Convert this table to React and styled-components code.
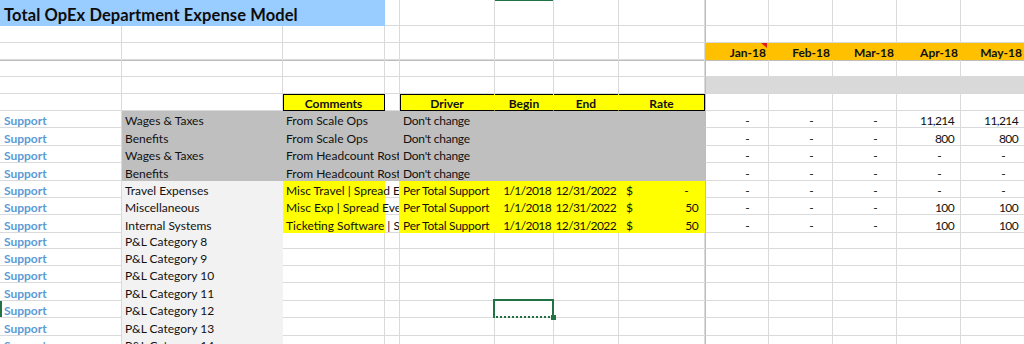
// NPM
import React from "react";
import styled, { createGlobalStyle } from "styled-components";

// CONFIG
const GRID = "#dadada";
const FREEZE = "#bdbdbd";
const BLUE = "#99ccff";
const ORANGE = "#ffc000";
const YELLOW = "#ffff00";
const GRAY = "#bfbfbf";
const BAND = "#d9d9d9";
const PALE = "#f2f2f2";
const GREEN = "#217346";

const COLS = [122, 161, 102, 15, 95, 59, 65, 86, 64, 64, 64, 64, 64];
const ROWS = [26, 17, 17, 17, 17, 17, 17, 18, 17, 18, 17, 17, 18, 16, 17, 17, 18, 17, 18, 17];

const MONTHS = ["Jan-18", "Feb-18", "Mar-18", "Apr-18", "May-18"];

const LINES = [
  { cat: "Wages & Taxes", note: "From Scale Ops", driver: "Don't change", vals: ["-", "-", "-", "11,214", "11,214"] },
  { cat: "Benefits", note: "From Scale Ops", driver: "Don't change", vals: ["-", "-", "-", "800", "800"] },
  { cat: "Wages & Taxes", note: "From Headcount Roster", driver: "Don't change", vals: ["-", "-", "-", "-", "-"] },
  { cat: "Benefits", note: "From Headcount Roster", driver: "Don't change", vals: ["-", "-", "-", "-", "-"] },
  {
    cat: "Travel Expenses",
    note: "Misc Travel | Spread Evenly",
    driver: "Per Total Support",
    begin: "1/1/2018",
    end: "12/31/2022",
    rate: "-",
    vals: ["-", "-", "-", "-", "-"],
  },
  {
    cat: "Miscellaneous",
    note: "Misc Exp | Spread Evenly",
    driver: "Per Total Support",
    begin: "1/1/2018",
    end: "12/31/2022",
    rate: "50",
    vals: ["-", "-", "-", "100", "100"],
  },
  {
    cat: "Internal Systems",
    note: "Ticketing Software | Spread Evenly",
    driver: "Per Total Support",
    begin: "1/1/2018",
    end: "12/31/2022",
    rate: "50",
    vals: ["-", "-", "-", "100", "100"],
  },
];

const EXTRA = [8, 9, 10, 11, 12, 13, 14];
const SELECTED_ROW = 17;

const GlobalStyle = createGlobalStyle`
  html, body {
    margin: 0;
    padding: 0;
    background: #fff;
    overflow: hidden;
  }
  body {
    font-family: Lato, "Open Sans", sans-serif;
    color: #111;
  }
`;

const Sheet = styled.div`
  display: grid;
  grid-template-columns: ${COLS.map(c => `${c}px`).join(" ")};
  grid-template-rows: ${ROWS.map(r => `${r}px`).join(" ")};
  width: 1024px;
  height: 344px;
  overflow: hidden;
`;

const edge = (p, side) =>
  p.$outline && p.$outline.includes(side) ? "#000" : p.$bg || GRID;

const shadows = p => {
  const s = [];
  if (p.$outline && p.$outline.includes("t")) s.push("inset 0 1px 0 #000");
  if (p.$outline && p.$outline.includes("l")) s.push("inset 1px 0 0 #000");
  if (p.$mark === "top") s.push(`inset 0 1px 0 ${GREEN}`);
  if (p.$mark === "left") s.push(`inset 2px 0 0 ${GREEN}`);
  if (p.$freezeTop) s.push(`inset 0 1px 0 ${FREEZE}`);
  return s.length ? s.join(", ") : "none";
};

const justify = { left: "flex-start", right: "flex-end", center: "center", between: "space-between" };

const Cell = styled.div`
  box-sizing: border-box;
  position: relative;
  display: flex;
  align-items: flex-end;
  justify-content: ${p => justify[p.$align || "left"]};
  min-width: 0;
  padding: 0 ${p => (p.$pr != null ? p.$pr : 3)}px 0 ${p => (p.$pl != null ? p.$pl : 3)}px;
  background: ${p => p.$bg || "#fff"};
  border-right: 1px solid ${p => edge(p, "r")};
  border-bottom: 1px solid ${p => edge(p, "b")};
  border-left: ${p => (p.$freezeLeft ? `1px solid ${FREEZE}` : "none")};
  box-shadow: ${shadows};
  font-size: 12px;
  line-height: 13px;
  letter-spacing: ${p => (p.$num ? "-0.6px" : p.$tight ? "-0.25px" : "0")};
  font-weight: ${p => (p.$bold ? 700 : 400)};
  color: ${p => p.$color || "#111"};
  white-space: nowrap;
  overflow: ${p => (p.$spill || p.$selected || p.$note ? "visible" : "hidden")};
  z-index: ${p => (p.$selected ? 3 : p.$spill ? 1 : "auto")};
  grid-column: ${p => (p.$span ? `span ${p.$span}` : "auto")};

  ${p =>
    p.$selected &&
    `
    &::after {
      content: "";
      position: absolute;
      left: -2px;
      top: -2px;
      right: -1px;
      bottom: -1px;
      border: 2px solid ${GREEN};
      border-bottom-style: dotted;
    }
    &::before {
      content: "";
      position: absolute;
      right: -3px;
      bottom: -3px;
      width: 5px;
      height: 5px;
      background: ${GREEN};
      z-index: 1;
    }
  `}

  ${p =>
    p.$note &&
    `
    &::after {
      content: "";
      position: absolute;
      top: 0;
      right: 1px;
      border-style: solid;
      border-width: 0 6px 5px 0;
      border-color: transparent #e01b1b transparent transparent;
    }
  `}
`;

const TitleCell = styled(Cell)`
  font-size: 16.5px;
  line-height: 16px;
  letter-spacing: 0.1px;
  padding-bottom: 2px;
  padding-left: 4px;
  color: #0d0d0d;
`;

const Spill = styled.span`
  display: block;
  flex: 1 1 auto;
  min-width: 0;
  overflow: hidden;
  margin-right: ${p => -(p.$spill + 3)}px;
`;

const Amount = styled.span`
  margin-right: ${p => (p.$dash ? 10 : 0)}px;
`;

const Blank = ({ n, from = 0, mark, freezeTop, markCol }) =>
  Array.from({ length: n }, (_, i) => {
    const col = from + i;
    return (
      <Cell
        key={col}
        $freezeLeft={col === 8}
        $freezeTop={freezeTop}
        $mark={markCol === col ? mark : undefined}
      />
    );
  });

const MonthValues = ({ vals }) =>
  vals.map((v, i) => (
    <Cell key={`m${i}`} $num $align="right" $pr={v === "-" ? 19 : 6} $freezeLeft={i === 0}>
      {v}
    </Cell>
  ));

function SupportRow({ line }) {
  const gray = !line.begin;
  const fill = gray ? GRAY : YELLOW;
  return (
    <>
      <Cell $bold $color="#5b9bd5" $pl={4}>
        Support
      </Cell>
      <Cell $bg={gray ? GRAY : PALE}>{line.cat}</Cell>
      <Cell $bg={fill} $spill>
        <Spill $spill={15}>{line.note}</Spill>
      </Cell>
      <Cell $bg={gray ? GRAY : undefined} />
      <Cell $bg={fill} $tight>
        {line.driver}
      </Cell>
      <Cell $bg={fill} $num $align="right" $pr={2}>
        {line.begin}
      </Cell>
      <Cell $bg={fill} $num $align="right" $pr={2}>
        {line.end}
      </Cell>
      <Cell $bg={fill} $num $align="between" $pl={7} $pr={6}>
        {line.rate && (
          <>
            <span>$</span>
            <Amount $dash={line.rate === "-"}>{line.rate}</Amount>
          </>
        )}
      </Cell>
      <MonthValues vals={line.vals} />
    </>
  );
}

function CategoryRow({ n, selected }) {
  return (
    <>
      <Cell $bold $color="#5b9bd5" $pl={4} $mark={selected ? "left" : undefined}>
        Support
      </Cell>
      <Cell $bg={PALE}>P&amp;L Category {n}</Cell>
      <Cell />
      <Cell />
      <Cell />
      <Cell $selected={selected} />
      <Cell />
      <Cell />
      <Blank n={5} from={8} />
    </>
  );
}

// MODULE
export default function App() {
  return (
    <>
      <GlobalStyle />
      <Sheet>
        {/* row 0 : title */}
        <TitleCell $span={3} $bg={BLUE} $bold>
          Total OpEx Department Expense Model
        </TitleCell>
        <Blank n={10} from={3} mark="top" markCol={5} />

        {/* row 1 */}
        <Blank n={13} />

        {/* row 2 : months */}
        <Blank n={8} />
        {MONTHS.map((m, i) => (
          <Cell key={m} $bg={ORANGE} $bold $align="right" $pr={2} $freezeLeft={i === 0} $note={i === 0}>
            {m}
          </Cell>
        ))}

        {/* row 3 */}
        <Blank n={13} freezeTop />

        {/* row 4 : band */}
        <Blank n={8} />
        {MONTHS.map((m, i) => (
          <Cell key={`b${m}`} $bg={BAND} $freezeLeft={i === 0} />
        ))}

        {/* row 5 : headers */}
        <Cell />
        <Cell />
        <Cell $bg={YELLOW} $bold $align="center" $outline="tblr">
          Comments
        </Cell>
        <Cell />
        <Cell $bg={YELLOW} $bold $align="center" $outline="tbl">
          Driver
        </Cell>
        <Cell $bg={YELLOW} $bold $align="center" $outline="tb">
          Begin
        </Cell>
        <Cell $bg={YELLOW} $bold $align="center" $outline="tb">
          End
        </Cell>
        <Cell $bg={YELLOW} $bold $align="center" $outline="tbr">
          Rate
        </Cell>
        <Blank n={5} from={8} />

        {LINES.map((line, i) => (
          <SupportRow key={i} line={line} />
        ))}

        {EXTRA.map((n, i) => (
          <CategoryRow key={n} n={n} selected={13 + i === SELECTED_ROW} />
        ))}
      </Sheet>
    </>
  );
}
